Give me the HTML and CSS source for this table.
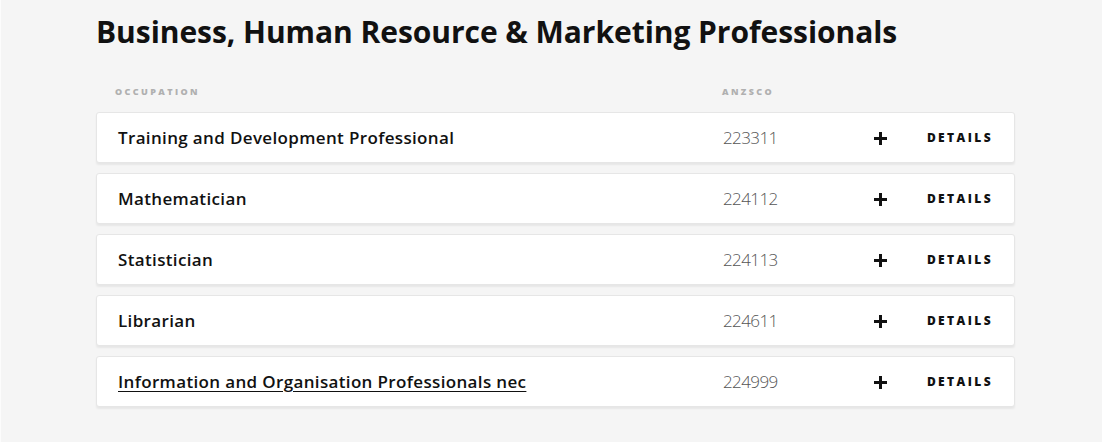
FILE: index.html
```html
<!DOCTYPE html>
<html lang="en">
<head>
  <meta charset="UTF-8">
  <title>Business, Human Resource &amp; Marketing Professionals</title>
  <link rel="stylesheet" href="styles.css">
</head>
<body>

  <div class="page">
    <h2>Business, Human Resource &amp; Marketing Professionals</h2>

    <div class="table-head">
      <span>Occupation</span>
      <span>ANZSCO</span>
    </div>

    <div class="list">
      <div class="row">
        <span class="name">Training and Development Professional</span>
        <span class="code">223311</span>
        <span class="plus"><svg width="13" height="13" viewBox="0 0 13 13"><path d="M5 0h3v5h5v3H8v5H5V8H0V5h5z" fill="#111"/></svg></span>
        <span class="details">Details</span>
      </div>
      <div class="row">
        <span class="name">Mathematician</span>
        <span class="code">224112</span>
        <span class="plus"><svg width="13" height="13" viewBox="0 0 13 13"><path d="M5 0h3v5h5v3H8v5H5V8H0V5h5z" fill="#111"/></svg></span>
        <span class="details">Details</span>
      </div>
      <div class="row">
        <span class="name">Statistician</span>
        <span class="code">224113</span>
        <span class="plus"><svg width="13" height="13" viewBox="0 0 13 13"><path d="M5 0h3v5h5v3H8v5H5V8H0V5h5z" fill="#111"/></svg></span>
        <span class="details">Details</span>
      </div>
      <div class="row">
        <span class="name">Librarian</span>
        <span class="code">224611</span>
        <span class="plus"><svg width="13" height="13" viewBox="0 0 13 13"><path d="M5 0h3v5h5v3H8v5H5V8H0V5h5z" fill="#111"/></svg></span>
        <span class="details">Details</span>
      </div>
      <div class="row">
        <a class="name link" href="#">Information and Organisation Professionals nec</a>
        <span class="code">224999</span>
        <span class="plus"><svg width="13" height="13" viewBox="0 0 13 13"><path d="M5 0h3v5h5v3H8v5H5V8H0V5h5z" fill="#111"/></svg></span>
        <span class="details">Details</span>
      </div>
    </div>
  </div>

</body>
</html>
```

FILE: styles.css
```css
html, body {
  margin: 0;
  height: 100%;
}

body {
  font-family: 'Open Sans', sans-serif;
  background: #f5f5f5;
  color: #111;
}

.page {
  min-height: 100%;
  box-sizing: border-box;
  border-left: 1px solid #fcfcfc;
  padding: 12px 87px 0 95px;
}

h2 {
  margin: 0;
  font-size: 30px;
  font-weight: 700;
  line-height: 40px;
  letter-spacing: -0.05px;
  color: #111;
}

.table-head {
  display: grid;
  grid-template-columns: 607px 1fr;
  padding: 33px 0 0 19px;
  height: 14px;
  font-size: 9px;
  font-weight: 800;
  letter-spacing: 2.4px;
  line-height: 14px;
  text-transform: uppercase;
  color: #b0b0b0;
}

.list {
  margin-top: 13px;
  display: flex;
  flex-direction: column;
  gap: 10px;
}

.row {
  display: grid;
  grid-template-columns: 605px 140px 34px 1fr;
  align-items: center;
  height: 49px;
  padding: 0 21px 0 21px;
  background: #fff;
  border: 1px solid #e6e6e6;
  border-radius: 3px;
  box-shadow: 0 2px 2px rgba(0,0,0,0.06);
}

.name {
  font-size: 17px;
  font-weight: 600;
  letter-spacing: 0.35px;
  color: #111;
}

.link {
  text-decoration: underline;
  text-underline-offset: 3px;
}

.code {
  font-size: 17px;
  font-weight: 300;
  letter-spacing: -0.6px;
  color: #555;
}

.plus {
  display: flex;
  justify-content: center;
  padding-top: 2px;
}

.details {
  justify-self: end;
  font-size: 12px;
  font-weight: 800;
  letter-spacing: 2.4px;
  text-transform: uppercase;
  color: #111;
}
```
